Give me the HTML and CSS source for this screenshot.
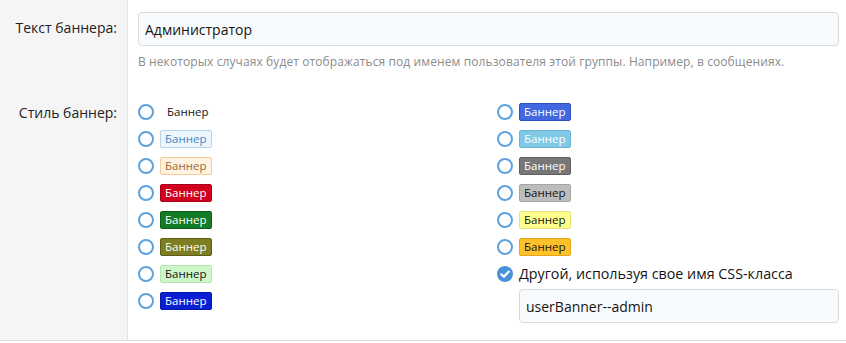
FILE: index.html
```html
<!DOCTYPE html>
<html lang="ru">
<head>
  <meta charset="UTF-8" />
  <title>Баннер группы</title>
  <link rel="stylesheet" href="styles.css">
</head>
<body>

  <div class="form-block">
    <div class="form-row">
      <div class="form-label">Текст баннера:</div>
      <div class="form-input">
        <input type="text" class="text-input" value="Администратор" />
        <div class="hint">В некоторых случаях будет отображаться под именем пользователя этой группы. Например, в сообщениях.</div>
      </div>
    </div>

    <div class="form-row form-row--last">
      <div class="form-label form-label--radio">Стиль баннер:</div>
      <div class="form-input">
        <div class="radio-columns">
          <ul class="radio-list">
            <li><span class="radio"></span><span class="banner banner--plain">Баннер</span></li>
            <li><span class="radio"></span><span class="banner banner--primary">Баннер</span></li>
            <li><span class="radio"></span><span class="banner banner--accent">Баннер</span></li>
            <li><span class="radio"></span><span class="banner banner--red">Баннер</span></li>
            <li><span class="radio"></span><span class="banner banner--green">Баннер</span></li>
            <li><span class="radio"></span><span class="banner banner--olive">Баннер</span></li>
            <li><span class="radio"></span><span class="banner banner--lightGreen">Баннер</span></li>
            <li><span class="radio"></span><span class="banner banner--blue">Баннер</span></li>
          </ul>
          <ul class="radio-list">
            <li><span class="radio"></span><span class="banner banner--royalBlue">Баннер</span></li>
            <li><span class="radio"></span><span class="banner banner--skyBlue">Баннер</span></li>
            <li><span class="radio"></span><span class="banner banner--gray">Баннер</span></li>
            <li><span class="radio"></span><span class="banner banner--silver">Баннер</span></li>
            <li><span class="radio"></span><span class="banner banner--yellow">Баннер</span></li>
            <li><span class="radio"></span><span class="banner banner--orange">Баннер</span></li>
            <li class="radio-other">
              <span class="radio radio--checked">
                <svg viewBox="0 0 16 16" width="16" height="16"><circle cx="8" cy="8" r="8" fill="#4a90d9"/><path d="M4.3 8.3 L6.9 10.8 L11.8 5.6" fill="none" stroke="#fff" stroke-width="2.2" stroke-linecap="round" stroke-linejoin="round"/></svg>
              </span>
              <span class="other-label">Другой, используя свое имя CSS-класса</span>
            </li>
            <li class="radio-dependent">
              <input type="text" class="text-input" value="userBanner--admin" />
            </li>
          </ul>
        </div>
      </div>
    </div>
  </div>

</body>
</html>
```

FILE: styles.css
```css
body {
  margin: 0;
  font-family: 'Open Sans', 'Noto Sans', sans-serif;
  background-color: #fff;
  color: #141414;
}

.form-block {
  border-bottom: 1px solid #dcdcdc;
}

.form-row {
  display: flex;
}

.form-label {
  width: 117px;
  flex: 0 0 117px;
  padding: 18px 10px 0 0;
  text-align: right;
  font-size: 14px;
  background-color: #f5f5f5;
  border-right: 1px solid #e2e2e2;
  color: #222;
}

.form-label--radio {
  padding-top: 20px;
}

.form-input {
  flex: 1;
  padding: 12px 7px 12px 10px;
}

.form-row--last .form-input {
  padding-top: 15px;
  padding-bottom: 17px;
}

.text-input {
  display: block;
  box-sizing: border-box;
  width: 100%;
  height: 34px;
  padding: 0 6px;
  font-family: inherit;
  font-size: 14px;
  color: #141414;
  background-color: #f8fbfd;
  border: 1px solid #dadada;
  border-radius: 4px;
}

.hint {
  margin-top: 7px;
  font-size: 12px;
  letter-spacing: 0.1px;
  line-height: 18px;
  color: #8c8c8c;
}

.radio-columns {
  display: grid;
  grid-template-columns: 359px 1fr;
}

.radio-list {
  list-style: none;
  margin: 0;
  padding: 0;
}

.radio-list li {
  display: flex;
  align-items: center;
  height: 27px;
}

.radio {
  box-sizing: border-box;
  width: 16px;
  height: 16px;
  flex: 0 0 16px;
  border: 2.5px solid #5ea2dc;
  border-radius: 50%;
  margin-right: 6px;
}

.radio--checked {
  border: none;
}

.radio--checked svg {
  display: block;
}

.other-label {
  font-size: 14.3px;
}

.radio-list li.radio-dependent {
  height: auto;
  padding: 2px 0 0 22px;
}

.banner {
  box-sizing: border-box;
  display: inline-block;
  width: 52px;
  height: 18px;
  line-height: 16px;
  padding: 0 4px;
  font-size: 11.5px;
  border: 1px solid transparent;
  border-radius: 2px;
  white-space: nowrap;
}

.banner--plain { color: #141414; padding-left: 6px; }
.banner--primary { color: #4a87c4; background: #edf6fd; border-color: #b5d4ee; }
.banner--accent { color: #a0672e; background: #fef2e3; border-color: #f5cc98; }
.banner--red { color: #fff; background: #d1001c; border-color: #a8001a; }
.banner--green { color: #fff; background: #137b26; border-color: #0d5e1c; }
.banner--olive { color: #fff; background: #7d7d21; border-color: #5e5e14; }
.banner--lightGreen { color: #141414; background: #cdf6c9; border-color: #b4e7b0; }
.banner--blue { color: #fff; background: #0a1fd4; border-color: #0716a8; }
.banner--royalBlue { color: #fff; background: #4168e0; border-color: #2f52c0; }
.banner--skyBlue { color: #fff; background: #80c9e6; border-color: #6bb6d6; }
.banner--gray { color: #fff; background: #777; border-color: #5f5f5f; }
.banner--silver { color: #141414; background: #bdbdbd; border-color: #a5a5a5; }
.banner--yellow { color: #141414; background: #ffff8e; border-color: #ece07d; }
.banner--orange { color: #141414; background: #ffc12a; border-color: #e3a51a; }
```
